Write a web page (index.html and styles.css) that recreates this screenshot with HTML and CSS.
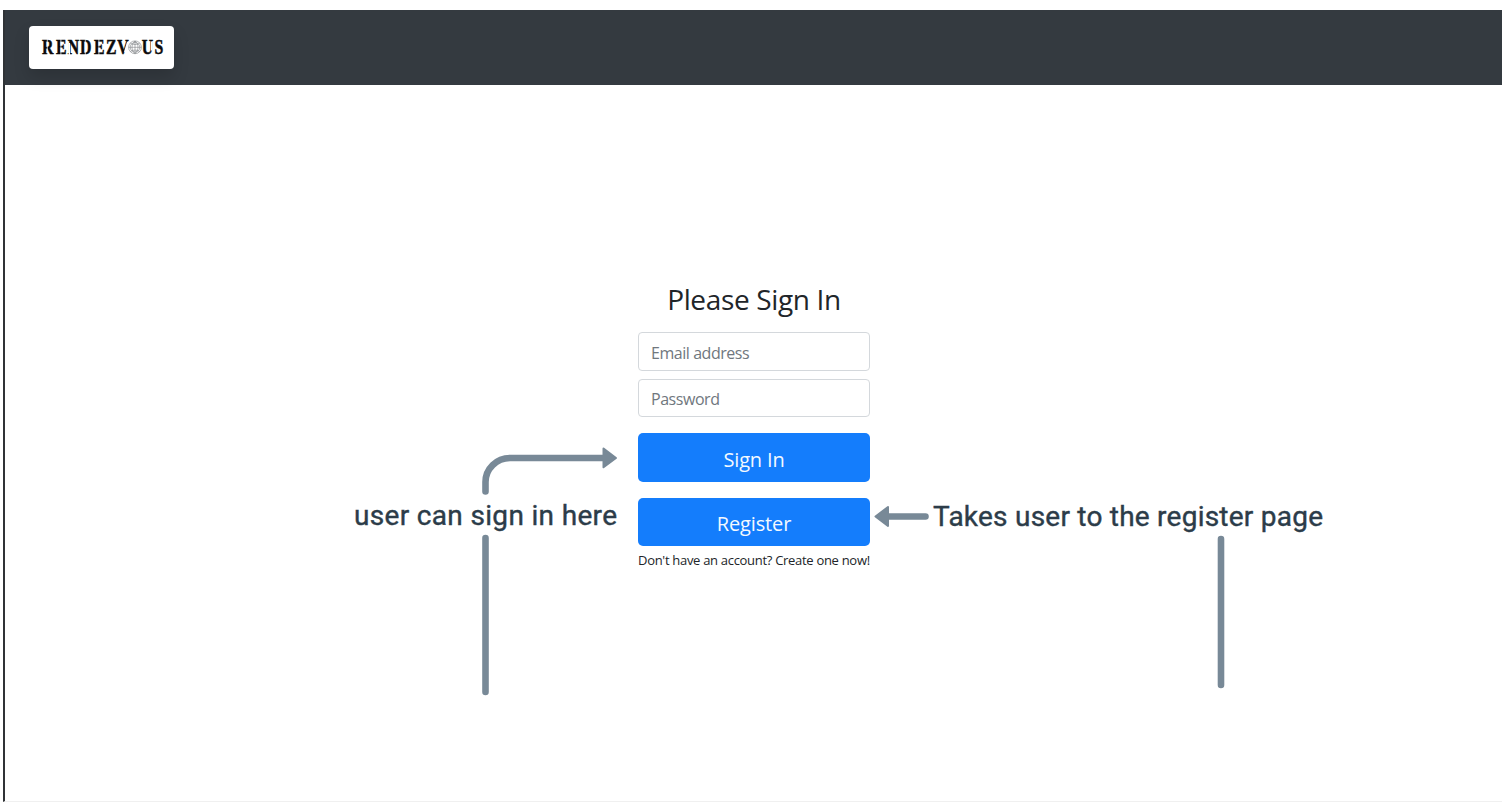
FILE: index.html
```html
<!DOCTYPE html>
<html lang="en">
<head>
<meta charset="utf-8">
<title>Rendezvous</title>
<link rel="stylesheet" href="styles.css">
</head>
<body>
<div class="window">
  <header class="navbar">
    <a class="brand" aria-label="Rendezvous">
      <svg class="logo" width="145" height="43" viewBox="0 0 145 43">
        <text class="logo-text" transform="scale(.77 1)" y="28.2" x="17 35.2 50.2 66.200 84.5 100 114.5 146.5 163">RENDEZVUS</text>
        <path class="logo-cut" d="M18.300 13v17M31.900 13v17M56.300 13v17M69.900 13v17"/>
        <path class="logo-cut wide" d="M40.300 17v12M98.800 16l-3 10M122.600 15.500v9"/>
        <g class="globe">
          <circle cx="106" cy="21.3" r="6.4"/>
          <circle cx="106" cy="21.3" r="4.8"/>
          <path d="M106 15v12.6M99.7 21.3h12.6M101.3 17c3 2 6.500 2 9.400 0M101.300 25.600c3-2 6.500-2 9.400 0M106 15c-4 4-4 9 0 12.600c4-4 4-9 0-12.600"/>
        </g>
      </svg>
    </a>
  </header>
  <main class="page">
    <form class="signin">
      <h1 class="title">Please Sign In</h1>
      <input class="field email" type="email" placeholder="Email address">
      <input class="field password" type="password" placeholder="Password">
      <button class="btn" type="button">Sign In</button>
      <button class="btn register" type="button">Register</button>
      <p class="hint">Don't have an account? Create one now!</p>
    </form>
  </main>
</div>
<svg class="notes" width="1504" height="802" viewBox="0 0 1504 802">
  <g class="connector">
    <path d="M485.500 491.500V482A24.500 24 0 0 1 510 458H603M485.500 538V692M1221 539V685M925.500 516.500H888"/>
  </g>
  <g class="arrowhead">
    <path d="M603.500 448.500L616 458L603.500 467.300Z"/>
    <path d="M888 507L875.500 516.500L888 526Z"/>
  </g>
  <text class="note" x="354" y="525" textLength="263">user can sign in here</text>
  <text class="note" x="933" y="526" textLength="390">Takes user to the register page</text>
</svg>
</body>
</html>
```
FILE: styles.css
```css
* { box-sizing: border-box; }
body { margin: 0; height: 802px; overflow: hidden; background: #fff; font-family: "Open Sans", "Noto Sans", sans-serif; color: #212529; }
.window { height: 792px; margin: 10px 2px 0 3px; border-left: 2px solid #303336; border-bottom: 1px solid #f0f0f0; }
.navbar { height: 75px; padding: 16px 24px; background: #343a40; }
.brand { display: block; width: 145px; height: 43px; background: #fff; border-radius: 4px; box-shadow: 0 8px 16px rgba(0, 0, 0, .15); }
.logo { display: block; }
.logo-text { font: bold 20.5px "Liberation Serif", serif; fill: #0b0b0b; stroke: #0b0b0b; stroke-width: .5; }
.logo-cut { stroke: #fff; stroke-width: .7; fill: none; }
.wide { stroke-width: 1.5; }
.globe { fill: none; stroke: #7d8184; stroke-width: .6; }
.page { display: flex; justify-content: center; padding-top: 196px; }
.signin { display: flex; flex-direction: column; width: 232px; margin-left: 1px; }
.title { margin: 0 0 16px; height: 35px; font-size: 28px; line-height: 36px; font-weight: 400; text-align: center; white-space: nowrap; letter-spacing: -.35px; }
.field { width: 100%; height: 39px; padding: 2px 12px 0; border: 1px solid #d4d8dc; border-radius: 4px; background: #fff; font: 16px "Open Sans", sans-serif; letter-spacing: -.45px; outline: 0; }
.field::placeholder { color: #70777e; opacity: 1; }
.email { margin-bottom: 8px; }
.password { height: 38px; margin-bottom: 16px; }
.btn { height: 49px; padding: 3px 0 0; border: 0; border-radius: 5px; background: #147dfc; color: #f3f9ff; font: 20px "Open Sans", sans-serif; letter-spacing: -.15px; }
.register { height: 48px; margin-top: 16px; }
.hint { margin: 4px 0 0; font-size: 13px; line-height: 20px; white-space: nowrap; letter-spacing: -.3px; }
.notes { position: absolute; left: 0; top: 0; pointer-events: none; }
.connector { fill: none; stroke: #788997; stroke-width: 6.6; stroke-linecap: round; }
.arrowhead { fill: #788997; stroke: #788997; stroke-width: 2; stroke-linejoin: round; }
.note { font: 28px Roboto, sans-serif; fill: #2c3c49; stroke: #2c3c49; stroke-width: .4; }
```
